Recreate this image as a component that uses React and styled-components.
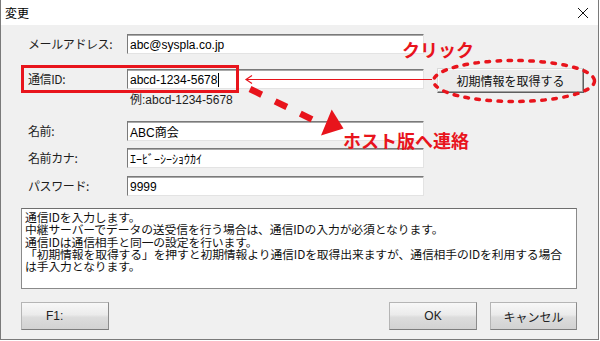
import React from 'react'
import styled, { createGlobalStyle } from 'styled-components'

const RED = '#e8141c'

const GlobalStyle = createGlobalStyle`
  html, body {
    margin: 0;
    padding: 0;
    background: #ffffff;
  }
  body {
    font-family: "Noto Sans CJK JP", "Noto Sans", sans-serif;
  }
`

export default function App() {
    return (
        <>
            <GlobalStyle />
            <Screen>
                <Window>
                    <TitleBar>
                        <Title>変更</Title>
                        <CloseButton>
                            <svg width="12" height="12" viewBox="0 0 12 12">
                                <path d="M1 1 L11 11 M11 1 L1 11" stroke="#111" strokeWidth="1" fill="none" />
                            </svg>
                        </CloseButton>
                    </TitleBar>

                    <Body>
                        <Row>
                            <Label>メールアドレス:</Label>
                            <Field>abc@syspla.co.jp</Field>
                        </Row>

                        <Row $gap={15}>
                            <Label>通信ID:</Label>
                            <Field>abcd-1234-5678<Caret /></Field>
                            <FetchButton>初期情報を取得する</FetchButton>
                        </Row>
                        <Hint>例:abcd-1234-5678</Hint>

                        <Row $gap={14}>
                            <Label>名前:</Label>
                            <Field>ABC商会</Field>
                        </Row>
                        <Row $gap={7}>
                            <Label>名前カナ:</Label>
                            <Field>ｴｰﾋﾞｰｼｰｼｮｳｶｲ</Field>
                        </Row>
                        <Row $gap={8}>
                            <Label>パスワード:</Label>
                            <Field>9999</Field>
                        </Row>

                        <Description>
                            <DescLine>通信IDを入力します。</DescLine>
                            <DescLine>中継サーバーでデータの送受信を行う場合は、通信IDの入力が必須となります。</DescLine>
                            <DescLine>通信IDは通信相手と同一の設定を行います。</DescLine>
                            <DescLine>「初期情報を取得する」を押すと初期情報より通信IDを取得出来ますが、通信相手のIDを利用する場合</DescLine>
                            <DescLine>は手入力となります。</DescLine>
                        </Description>

                        <ButtonBar>
                            <PushButton $align="left">F1:</PushButton>
                            <Spacer />
                            <PushButton>OK</PushButton>
                            <PushButton $w={87}>キャンセル</PushButton>
                        </ButtonBar>
                    </Body>
                </Window>

                {/* red annotations drawn over the dialog */}
                <Annotations>
                    <svg width="600" height="341" viewBox="0 0 600 341">
                        <rect x="22.5" y="66.5" width="215" height="25" fill="none" stroke={RED} strokeWidth="3" />
                        <line x1="246" y1="79.5" x2="432" y2="79.5" stroke={RED} strokeWidth="1.2" />
                        <path d="M252 75.5 L246 79.5 L252 83.5" fill="none" stroke={RED} strokeWidth="1.2" />
                        <ellipse cx="514" cy="81" rx="80.5" ry="20.5" fill="none" stroke={RED}
                            strokeWidth="3.5" strokeDasharray="3.5 7.5" strokeLinecap="round" />
                        <line x1="250" y1="89" x2="318" y2="122.3" stroke={RED} strokeWidth="6.5" strokeDasharray="13 15" />
                        <polygon points="331.7,109.5 343.5,128.5 321,135.5" fill={RED} />
                    </svg>
                    <ClickNote>クリック</ClickNote>
                    <ContactNote>ホスト版へ連絡</ContactNote>
                </Annotations>
            </Screen>
        </>
    )
};

// Styled Components
const Screen = styled.div`
position: relative;
width: 600px;
height: 341px;
overflow: hidden;
background: #ffffff;
`

const Window = styled.div`
box-sizing: border-box;
width: 599px;
height: 340px;
display: flex;
flex-direction: column;
background: #f0f0f0;
border: 1px solid #7a7a7a;
border-top: none;
`

const TitleBar = styled.div`
height: 25px;
flex: 0 0 25px;
display: flex;
align-items: center;
justify-content: space-between;
background: #ffffff;
padding: 0 9px 0 4px;
`

const Title = styled.span`
font-size: 12px;
color: #000;
line-height: 14px;
`

const CloseButton = styled.span`
display: flex;
width: 12px;
height: 12px;
`

const Body = styled.div`
display: flex;
flex-direction: column;
padding: 9px 21px 0 20px;
`

const Row = styled.div`
display: flex;
align-items: flex-start;
margin-top: ${p => p.$gap || 0}px;
`

const Label = styled.div`
flex: 0 0 99px;
padding-left: 7px;
font-size: 12px;
line-height: 20px;
color: #1e1e1e;
letter-spacing: -0.4px;
`

const Field = styled.div`
box-sizing: border-box;
flex: 0 0 297px;
height: 20px;
display: flex;
align-items: center;
padding: 1px 2px 0;
background: #ffffff;
border: 1px solid;
border-color: #7a7a7a #e3e3e3 #e3e3e3 #7a7a7a;
box-shadow: inset 0 1px 0 #a9a9a9;
font-family: "Liberation Sans", "Noto Sans CJK JP", sans-serif;
font-size: 12px;
color: #000;
white-space: nowrap;
`

const Caret = styled.span`
display: inline-block;
width: 1px;
height: 14px;
margin-left: 1px;
background: #000;
`

const FetchButton = styled.div`
box-sizing: border-box;
flex: 0 0 147px;
height: 25px;
margin: -1px 0 0 13px;
display: flex;
align-items: center;
justify-content: center;
background: #ececec;
border: 1px solid;
border-color: #d9d9d9 #5f5f5f #5f5f5f #d9d9d9;
box-shadow: inset -1px -1px 0 #a0a0a0, inset 1px 1px 0 #fbfbfb;
font-size: 12px;
color: #111;
white-space: nowrap;
`

const Hint = styled.div`
margin-left: 109px;
font-family: "Liberation Sans", "Noto Sans CJK JP", sans-serif;
font-size: 12px;
line-height: 14px;
color: #1e1e1e;
`

const Description = styled.div`
box-sizing: border-box;
height: 81px;
margin-top: 12px;
padding: 2px 3px;
background: #ffffff;
border: 1px solid #8a8a8a;
border-top-color: #6e6e6e;
display: flex;
flex-direction: column;
`

const DescLine = styled.div`
height: 12.3px;
font-size: 11.8px;
line-height: 12.3px;
color: #111;
white-space: nowrap;
letter-spacing: -0.1px;
`

const ButtonBar = styled.div`
display: flex;
gap: 13px;
margin-top: 13px;
`

const Spacer = styled.div`
flex: 1;
`

const PushButton = styled.div`
box-sizing: border-box;
flex: 0 0 ${p => p.$w || 88}px;
height: 28px;
display: flex;
align-items: center;
justify-content: ${p => p.$align === 'left' ? 'flex-start' : 'center'};
padding-left: ${p => p.$align === 'left' ? '24px' : '0'};
background: linear-gradient(#f8f8f8, #ebebeb 45%, #dcdcdc 55%, #d2d2d2);
border: 1px solid;
border-color: #b5b5b5 #8c8c8c #7c7c7c #b5b5b5;
font-family: "Liberation Sans", "Noto Sans CJK JP", sans-serif;
font-size: 12px;
color: #222;
`

const Annotations = styled.div`
position: absolute;
inset: 0;
pointer-events: none;

    & svg {
        position: absolute;
        left: 0;
        top: 0;
    }
`

const Note = styled.div`
position: absolute;
font-family: "Noto Sans CJK JP", sans-serif;
font-weight: 700;
font-size: 18px;
line-height: 22px;
color: ${RED};
white-space: nowrap;
`

const ClickNote = styled(Note)`
left: 402px;
top: 38px;
`

const ContactNote = styled(Note)`
left: 343px;
top: 129px;
`
